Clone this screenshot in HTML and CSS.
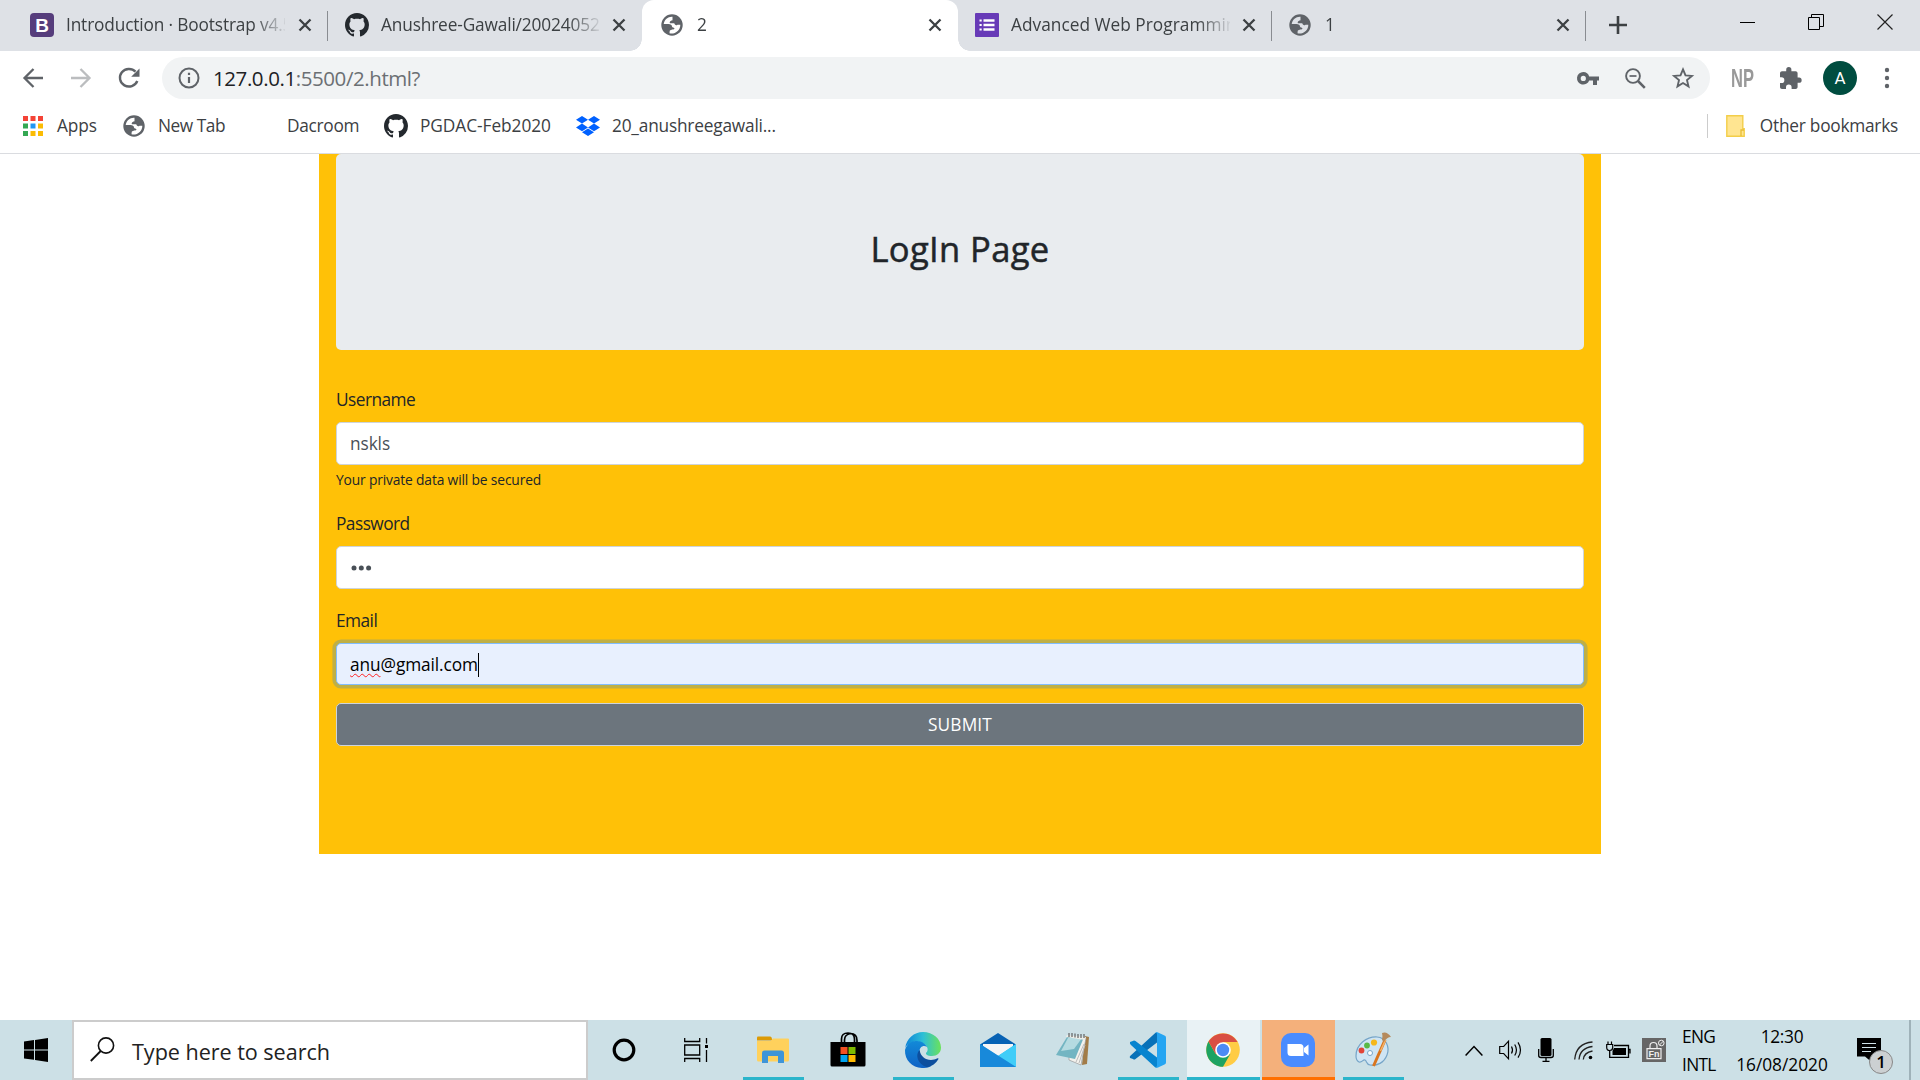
FILE: index.html
```html
<!DOCTYPE html>
<html lang="en">
<head>
<meta charset="utf-8">
<title>2</title>
<link rel="stylesheet" href="styles.css">
</head>
<body>
<svg class="defs" width="0" height="0">
  <defs>
    <symbol id="globe" viewBox="0 0 22 22"><circle cx="11" cy="11" r="10.700" fill="#5f6368"/><path fill="#dee1e6" d="M11.500 2.800C7 2.500 3.500 5.500 2.700 10H7.500C9.500 10 11 11 11 12.500C11 13.700 13.500 13.500 13.500 14.800C12 16 9 15.500 8.700 17L8.500 19.300C14 20.500 19.500 16.500 19.300 10.700H16.500C15 12 13.500 10.500 13.300 9.300H9C8 7.500 10 6.500 11.500 6.200Z"/></symbol>
    <symbol id="globe-w" viewBox="0 0 22 22"><circle cx="11" cy="11" r="10.700" fill="#5f6368"/><path fill="#fff" d="M11.500 2.800C7 2.500 3.500 5.500 2.700 10H7.500C9.500 10 11 11 11 12.500C11 13.700 13.500 13.500 13.500 14.800C12 16 9 15.500 8.700 17L8.500 19.300C14 20.500 19.500 16.500 19.300 10.700H16.500C15 12 13.500 10.500 13.300 9.300H9C8 7.500 10 6.500 11.500 6.200Z"/></symbol>
    <symbol id="github" viewBox="0 0 16 16"><path fill="#24292e" d="M8 0C3.580 0 0 3.580 0 8c0 3.540 2.290 6.530 5.470 7.590.4.070.55-.17.55-.38 0-.19-.01-.82-.01-1.490-2.010.37-2.530-.49-2.690-.94-.09-.23-.48-.94-.82-1.130-.28-.15-.68-.52-.01-.53.63-.01 1.080.58 1.230.82.72 1.210 1.870.87 2.330.66.07-.52.28-.87.51-1.070-1.780-.2-3.640-.89-3.640-3.950 0-.87.31-1.590.82-2.150-.08-.2-.36-1.020.08-2.120 0 0 .67-.21 2.200.82.64-.18 1.320-.27 2-.27s1.360.09 2 .27c1.530-1.040 2.200-.82 2.200-.82.44 1.100.16 1.920.08 2.120.51.56.82 1.270.82 2.150 0 3.070-1.870 3.750-3.650 3.950.29.25.54.73.54 1.480 0 1.070-.01 1.930-.01 2.200 0 .21.15.46.55.38A8.010 8.010 0 0 0 16 8c0-4.420-3.580-8-8-8z"/></symbol>
    <symbol id="close" viewBox="0 0 14 14"><path d="M1.500 1.500L12.500 12.500M12.500 1.500L1.500 12.500" stroke="#3c4043" stroke-width="2.300"/></symbol>
  </defs>
</svg>

<header class="tabs">
  <div class="tab first"><svg class="fav" viewBox="0 0 24 24"><rect width="24" height="24" rx="4" fill="#563d7c"/><text x="12" y="19" text-anchor="middle" class="bs">B</text></svg><span class="title t1">Introduction · Bootstrap v4.5</span><svg class="x"><use href="#close"/></svg></div>
  <div class="tab"><svg class="fav"><use href="#github"/></svg><span class="title t2">Anushree-Gawali/200240520</span><svg class="x"><use href="#close"/></svg></div>
  <div class="tab active"><svg class="fav globe"><use href="#globe-w"/></svg><span class="title">2</span><svg class="x"><use href="#close"/></svg></div>
  <div class="tab"><svg class="fav" viewBox="0 0 24 24"><rect width="24" height="24" rx="1" fill="#673ab7"/><path d="M8.500 7.500h11M8.500 12h11M8.500 16.500h11" stroke="#fff" stroke-width="2.700"/><path d="M4.500 7.500h2.200M4.500 12h2.200M4.500 16.500h2.200" stroke="#fff" stroke-width="2.200"/></svg><span class="title t4">Advanced Web Programming</span><svg class="x"><use href="#close"/></svg></div>
  <div class="tab"><svg class="fav globe"><use href="#globe"/></svg><span class="title">1</span><svg class="x"><use href="#close"/></svg></div>
  <svg class="plus" viewBox="0 0 18 18"><path d="M9 0v18M0 9h18" stroke="#3c4043" stroke-width="2.600"/></svg>
  <div class="win">
    <svg width="16" height="16"><path d="M1 8.500h15" stroke="#000"/></svg>
    <svg width="16" height="16"><path d="M.5 3.500h11v12h-11zM3.500 3.500v-3h12v12h-4" fill="none" stroke="#000"/></svg>
    <svg width="16" height="16"><path d="M.5 .5l15 15M15.500 .5l-15 15" stroke="#222" stroke-width="1.200"/></svg>
  </div>
</header>

<div class="toolbar">
  <svg width="20" height="20" viewBox="0 0 20 20"><path d="M20 10H2M10.500 1L1.500 10l9 9" fill="none" stroke="#5f6368" stroke-width="2.300"/></svg>
  <svg width="20" height="20" viewBox="0 0 20 20"><path d="M0 10h18M9.500 1l9 9-9 9" fill="none" stroke="#bbbdbf" stroke-width="2.300"/></svg>
  <svg width="21" height="20" viewBox="0 0 21 20"><path d="M18.300 13A9 8.800 0 1 1 16.500 3.700" fill="none" stroke="#5f6368" stroke-width="2.400"/><path d="M20.500 .5v8.300h-8.300z" fill="#5f6368"/></svg>
  <div class="omnibox">
    <svg width="22" height="22" viewBox="0 0 22 22"><circle cx="11" cy="11" r="9.500" fill="none" stroke="#5f6368" stroke-width="2"/><path d="M11 10v6M11 5.700v2.300" stroke="#5f6368" stroke-width="2.200"/></svg>
    <span class="url">127.0.0.1<span>:5500/2.html?</span></span>
    <svg width="22" height="13" viewBox="0 0 22 13"><path fill="#5f6368" fill-rule="evenodd" d="M6.300 0a6.300 6.300 0 1 0 5.900 8.500H16V13h4V8.500h2v-4H12.200A6.300 6.300 0 0 0 6.300 0zm0 3.800a2.600 2.600 0 1 1 0 5.200 2.600 2.600 0 0 1 0-5.200z"/></svg>
    <svg width="21" height="21" viewBox="0 0 21 21"><circle cx="8" cy="8" r="6.900" fill="none" stroke="#5f6368" stroke-width="1.900"/><path d="M4.500 8h7" stroke="#5f6368" stroke-width="1.700"/><path d="M13 13l6.800 6.800" stroke="#5f6368" stroke-width="2.500"/></svg>
    <svg width="22" height="22" viewBox="0 0 22 22"><path d="M11 2.400l2.500 6 6.400.5-4.900 4.200 1.500 6.300L11 16l-5.500 3.400L7 13.100 2.100 8.900l6.400-.5z" fill="none" stroke="#5f6368" stroke-width="1.900"/></svg>
  </div>
  <div class="ext">
    <span class="np">NP</span>
    <svg width="22" height="22" viewBox="0 0 22 22"><path fill="#5f6368" d="M19 10.500h-1.400V6.300c0-1.200-.9-2.100-2-2.100h-4.200V2.700a2.600 2.600 0 0 0-5.200 0v1.500H2c-1.100 0-2 .9-2 2v4.100h1.500a2.800 2.800 0 0 1 0 5.700H0v4c0 1.100.9 2 2 2h4v-1.600a2.800 2.800 0 0 1 5.600 0V22h4c1.100 0 2-.9 2-2v-4.200H19a2.600 2.600 0 0 0 0-5.300z"/></svg>
    <span class="avatar">A</span>
    <svg width="6" height="22" viewBox="0 0 6 22"><g fill="#5f6368"><circle cx="3" cy="3" r="2.200"/><circle cx="3" cy="11" r="2.200"/><circle cx="3" cy="19" r="2.200"/></g></svg>
  </div>
</div>

<nav class="bookmarks">
  <a class="bm apps"><svg width="20" height="20" viewBox="0 0 20 20"><g fill="#f44336"><path d="M0 0h5v5H0zM7.500 0h5v5h-5zM15 0h5v5h-5z"/></g><path fill="#34a853" d="M0 7.500h5v5H0zM0 15h5v5H0z"/><path fill="#2196f3" d="M7.500 7.500h5v5h-5z"/><path fill="#fbbc04" d="M15 7.500h5v5h-5zM7.500 15h5v5h-5zM15 15h5v5h-5z"/></svg><span>Apps</span></a>
  <a class="bm newtab"><svg width="22" height="22"><use href="#globe-w"/></svg><span>New Tab</span></a>
  <a class="bm dac"><span>Dacroom</span></a>
  <a class="bm pg"><svg width="24" height="24"><use href="#github"/></svg><span>PGDAC-Feb2020</span></a>
  <a class="bm drop"><svg width="24" height="20" viewBox="0 0 24 20"><path fill="#0061ff" d="M6 0l6 3.800-6 3.800L0 3.800zM18 0l6 3.800-6 3.800-6-3.800zM6 7.600l6 3.800-6 3.800-6-3.800zM18 7.600l6 3.800-6 3.800-6-3.800zM12 12.600l6 3.700-6 3.700-6-3.700z"/></svg><span>20_anushreegawali...</span></a>
  <a class="bm other"><svg width="19" height="22" viewBox="0 0 19 22"><path d="M.8 .8h16v13h1.400v7.400H.8z" fill="#ffe591" stroke="#f3ce49" stroke-width="1.400"/><path d="M15 21v-6h3" fill="none" stroke="#e8bd34" stroke-width="1.300"/></svg><span>Other bookmarks</span></a>
</nav>

<main class="page">
  <form class="container">
    <div class="jumbotron"><h2>LogIn Page</h2></div>
    <label class="user-label">Username</label>
    <div class="field">nskls</div>
    <small>Your private data will be secured</small>
    <label class="pass-label">Password</label>
    <div class="field"><svg width="22" height="6" viewBox="0 0 22 6"><g fill="#495057"><circle cx="4" cy="3" r="2.500"/><circle cx="11.300" cy="3" r="2.500"/><circle cx="18.600" cy="3" r="2.500"/></g></svg></div>
    <label class="mail-label">Email</label>
    <div class="field focus"><span class="typo">anu</span><span>@gmail.com</span><i class="caret"></i></div>
    <div class="submit">SUBMIT</div>
  </form>
</main>

<footer class="taskbar">
  <div class="start"><svg width="24" height="24" viewBox="0 0 24 24"><path d="M0 3.500l10-1.400v9.300H0zM11 2l13-2v11.400H11zM0 12.400h10v9.300l-10-1.300zM11 12.400h13V24l-13-2z"/></svg></div>
  <div class="search"><svg width="25" height="25" viewBox="0 0 25 25"><circle cx="16" cy="8.500" r="7.600" fill="none" stroke="#111" stroke-width="1.600"/><path d="M10.700 14L.8 24" stroke="#111" stroke-width="1.800"/></svg><span>Type here to search</span></div>
  <div class="sys"><svg width="24" height="24" viewBox="0 0 24 24"><circle cx="12" cy="12" r="9.800" fill="none" stroke="#000" stroke-width="3.200"/></svg></div>
  <div class="sys view"><svg width="25" height="24" viewBox="0 0 25 24"><path d="M.7 0v3.500h15V0M.7 24v-3.500h15V24M.7 7h15v10H.7zM22.500 0v5.500M22.500 12v12" fill="none" stroke="#000" stroke-width="1.300"/><path d="M21 7h3v3h-3z"/></svg></div>
  <div class="app run"><svg width="32" height="28" viewBox="0 0 32 28"><path fill="#dc9a05" d="M0 1.500Q0 .5 1 .5h12q1 0 1.500 1l1 3H0z"/><path fill="#ffd15c" d="M0 5h13.500l2.500-2.500h15q1 0 1 1V24q0 1.500-1.500 1.500h-29Q0 25.500 0 24z"/><path fill="#3f95d8" d="M5 17q0-2.500 2.500-2.500h17Q27 14.500 27 17v10h-6v-7H11v7H5z"/></svg></div>
  <div class="app"><svg width="36" height="36" viewBox="0 0 36 36"><path d="M11.500 11V7q0-6 6.500-6t6.500 6v4M14.500 11V8q0-5.500 6-6.500 6.500 0 6.500 7v3" fill="none" stroke="#000" stroke-width="1.700"/><path d="M.5 10h35v23q0 1.500-1.500 1.500H2Q.5 34.500.5 33z"/><path fill="#f25022" d="M10.500 15h7v7h-7z"/><path fill="#7fba00" d="M18.500 15h7v7h-7z"/><path fill="#00a4ef" d="M10.500 23h7v7h-7z"/><path fill="#ffb900" d="M18.500 23h7v7h-7z"/></svg></div>
  <div class="app run"><svg width="36" height="36" viewBox="0 0 36 36"><defs><linearGradient id="e1"><stop offset="0" stop-color="#0b83d8"/><stop offset=".5" stop-color="#2ebfd6"/><stop offset="1" stop-color="#6be25a"/></linearGradient><linearGradient id="e2" x2="0" y2="1"><stop offset="0" stop-color="#128ad8"/><stop offset="1" stop-color="#0f62c5"/></linearGradient></defs><path fill="url(#e1)" d="M.2 16C1.500 6.500 9 0 18 0c10 0 18 7 18 15.500 0 5.500-4 8.500-9 8.500-4.500 0-6.500-1.700-6-3 2-2 2-4 1-6C19 9 5 7 .2 16z"/><path fill="url(#e2)" d="M0 18C2 11 7 8.500 12 9c4.500.3 8.500 2.500 10 6-3.500-2.500-7.500 0-7.500 4.500C14.500 26 19 31 26 34c-3 2-6.500 2-9 2C7 35.500-.5 28 0 18z"/><path fill="#0d4f9e" d="M14.700 18C10 22 12 32 22 35.300c5-1 9-4 11.500-8.300.2-.7-.4-1-1-.7-8 4-17 .2-17.800-8.300z"/></svg></div>
  <div class="app"><svg width="36" height="34" viewBox="0 0 36 34"><path fill="#0762b4" d="M0 11.500L18 0l18 11.500v6H0z"/><path fill="#f5f5f5" d="M3 11h30v5L18 27 3 16z"/><path fill="#2fb8ef" d="M36 11v23H0V11l18 12z"/><path fill="#40cdf8" d="M36 11v23L18 23z"/><path fill="#1889da" d="M0 11l36 23H0z"/></svg></div>
  <div class="app"><svg width="36" height="34" viewBox="0 0 36 34"><path fill="#a27c48" d="M30 3l4 1-2 27-5 1z"/><path fill="#f3f2ed" stroke="#999" stroke-width=".7" d="M14 3l17 2-5 27-12-5z"/><path fill="#73b5c2" d="M12 4h17l-9 22L1 22z"/><path fill="#b5dbe1" d="M13 5h14l-8 11-13 2z"/><path fill="#edeee9" d="M12 2l19 2-1 3-19-3z"/><path d="M14 0v4M17 0v4M20 .5v4M23 1v4M26 1v4M29 1v4" stroke="#555" stroke-width="1.100"/><path d="M21 29l8-18M24 30l6-18" stroke="#bbb"/></svg></div>
  <div class="app run"><svg width="36" height="36" viewBox="0 0 36 36"><path fill="#0871b8" d="M0 26q-.7-1.300.4-2.300L25.500.7Q27 0 27 1v9.500L5.500 27q-1.300 1-2.500 0z"/><path fill="#0784cf" d="M0 10q-.4 1.600.7 2.700L25 35.300q2 1.200 2-1.300v-8.500L5.500 9Q4 8 2.800 9z"/><path fill="#25a5f2" d="M25.500.5Q26.500-.2 28 .4l7 3.400q1 .6 1 2v24.400q0 1.400-1 2l-7 3.400q-1.500.7-2.500 0 1.500.2 1.500-2V2.500Q27 .3 25.500.5z"/></svg></div>
  <div class="app tile chrome"><svg width="34" height="34" viewBox="0 0 34 34"><circle cx="17" cy="17" r="16.800" fill="#fc4"/><path fill="#1da362" d="M2.500 8.600A16.800 16.800 0 0 0 17 33.800L24.300 21 17 24 9.700 21z"/><path fill="#d94f43" d="M2.500 8.600A16.800 16.800 0 0 1 31.500 9H17L9.700 21z"/><circle cx="17" cy="17" r="7.800" fill="#fff"/><circle cx="17" cy="17" r="6.200" fill="#4c8bf5"/></svg></div>
  <div class="app tile zoomed"><svg width="34" height="34" viewBox="0 0 34 34"><rect width="34" height="34" rx="10" fill="#4a8cff"/><path fill="#fff" d="M6.500 11h12.500q3.500 0 3.500 3.500V23H10q-3.500 0-3.500-3.500zM23 15l4.500-3.500v11L23 19z"/></svg></div>
  <div class="app run"><svg width="36" height="36" viewBox="0 0 36 36"><path fill="#cfe5f4" stroke="#76a5c8" stroke-width="1.200" d="M1 24C1 12 12 4.500 22 5c9 .5 13 10 10 18-3 8-10 11-17 10-4-.7-3-4-5-5-2-1-3 3-6 2-2-1-3-3-3-6z"/><circle cx="6.500" cy="18.500" r="2.900" fill="#e24438"/><circle cx="12" cy="13.500" r="2.900" fill="#58b947"/><circle cx="19" cy="10.500" r="3.100" fill="#f5b81c"/><circle cx="15" cy="21" r="2.500" fill="#fff" stroke="#76a5c8"/><path d="M30 8L18.500 34" stroke="#d9751e" stroke-width="3"/><path d="M30.500 8l-5 11" stroke="#f4b46d" stroke-width="1.500"/><path fill="#b58a5c" d="M27 1q5-2 9 4-4 0-7 5l-2-2q1-4 0-7z"/></svg></div>
  <div class="tray">
    <svg width="18" height="11" viewBox="0 0 18 11"><path d="M.6 10.400L9 1.500l8.400 8.900" fill="none" stroke="#000" stroke-width="1.500"/></svg>
    <svg width="23" height="20" viewBox="0 0 23 20"><path d="M.7 6.500h4L9.500 1.200v17.600L4.700 13.500h-4zM12.500 6.500q2 3.500 0 7M15.700 4.500q3.500 5.500 0 11M19 2.300q5 7.700 0 15.400" fill="none" stroke="#000" stroke-width="1.200"/></svg>
    <svg width="16" height="24" viewBox="0 0 16 24"><rect x="2.500" width="11" height="18" rx="1.500"/><path d="M.7 11v6.500q0 2 2.300 2h10q2.300 0 2.300-2V11M8 19.500V23M4.500 23.300h7" fill="none" stroke="#000" stroke-width="1.300"/></svg>
    <svg width="19" height="19" viewBox="0 0 19 19"><path d="M.7 18.500Q2 2.500 18.500 1M5 18.500Q6 7 18.500 5.500M9.300 18.500Q10 11.500 18.500 10" fill="none" stroke="#222" stroke-width="1.300"/><circle cx="16.500" cy="16.500" r="1.800"/></svg>
    <svg width="25" height="18" viewBox="0 0 25 18"><path d="M8 4.500h14.500v11.800H3.700V10M22.500 8.500h1.500v4" fill="none" stroke="#000" stroke-width="1.300"/><path d="M8 7h12v7H6.500V10z"/><path d="M.7 3.500h6v3q0 3-3 3t-3-3zM2 3.500V.5M5.500 3.500V.5" fill="none" stroke="#000" stroke-width="1.200"/></svg>
    <svg width="24" height="24" viewBox="0 0 24 24"><path fill="#666" d="M0 0h24v24H0z"/><path d="M5 10.700h14v10H5zM8 10.500V8q0-3.500 3.500-3.500T15 8v2.500" fill="none" stroke="#eee" stroke-width="1.200"/><circle cx="19.300" cy="5" r="2.800" fill="none" stroke="#eee"/><path d="M17.500 7l4-4" stroke="#eee"/><text x="12" y="19" text-anchor="middle" class="fn">Fn</text></svg>
  </div>
  <div class="two lang"><span class="eng">ENG</span><span class="intl">INTL</span></div>
  <div class="two clock"><span class="time">12:30</span><span>16/08/2020</span></div>
  <div class="note"><svg width="25" height="24" viewBox="0 0 25 24"><path d="M0 0h24v18.500H14v5L8 18.500H0z"/><path d="M5 5.500h14M5 9.500h14M5 13.500h9" stroke="#cfe2e8" stroke-width="1"/></svg><b>1</b></div>
</footer>
</body>
</html>
```
FILE: styles.css
```css
* { box-sizing: border-box; }
body { margin: 0; width: 1920px; height: 1080px; overflow: hidden; display: flex; flex-direction: column; background: #fff; font: 17.3px/24px "Open Sans", "Noto Sans", sans-serif; color: #3c4043; }
svg { display: block; flex: none; overflow: visible; }
.defs { position: absolute; }

.tabs { height: 51px; background: #dee1e6; display: flex; align-items: center; padding-left: 14px; }
.tab { width: 314px; height: 51px; padding: 0 16px 1px 17px; display: flex; align-items: center; }
.tab.first { padding-left: 16px; }
.tab:not(.active) { background: linear-gradient(#898c91, #898c91) 100% 11px / 1.500px 30px no-repeat; }
.tab:nth-child(2) { background: none; }
.tab.active { width: 316px; padding-left: 19px; background: #fff; border-radius: 12px 12px 0 0; position: relative; }
.tab.active::before, .tab.active::after { content: ""; position: absolute; bottom: 0; width: 12px; height: 12px; }
.tab.active::before { left: -12px; background: radial-gradient(circle at 0 0, transparent 11.500px, #fff 12px); }
.tab.active::after { right: -12px; background: radial-gradient(circle at 100% 0, transparent 11.500px, #fff 12px); }
.fav { width: 24px; height: 24px; }
.fav.globe { width: 22px; height: 22px; margin-right: 2px; }
.bs { font: bold 19px "Liberation Sans", sans-serif; fill: #fff; }
.title { width: 219px; margin-left: 12px; overflow: hidden; white-space: nowrap; letter-spacing: -.15px; -webkit-mask-image: linear-gradient(90deg, #000 187px, transparent 222px); mask-image: linear-gradient(90deg, #000 187px, transparent 222px); }
.title.t4 { letter-spacing: .02px; }
.x { width: 14px; height: 14px; margin-left: 13px; }
.tab:nth-child(n+4) .x { margin-left: 12px; }
.plus { width: 18px; height: 18px; margin: -2px 0 0 23px; }
.win { margin: -7px 27px 0 auto; display: flex; gap: 53px; }

.toolbar { height: 54px; padding: 0 30px 0 23px; display: flex; align-items: center; gap: 28px; }
.omnibox { width: 1548px; height: 42px; margin-left: -6px; padding: 0 16px; border-radius: 21px; background: #f1f3f4; display: flex; align-items: center; gap: 26px; flex: none; }
.url { margin: 0 auto 0 -13px; font-size: 20.500px; letter-spacing: -.42px; color: #202124; }
.url span { color: #6b6f73; }
.ext { margin-left: -7px; display: flex; align-items: center; flex: none; }
.np { width: 24px; font: bold 25px/26px "Liberation Sans Narrow", "Liberation Sans", sans-serif; color: #999; transform: scaleX(.66); transform-origin: 0 50%; margin-right: 25px; }
.avatar { width: 34px; height: 34px; margin: 0 27px 0 21px; border-radius: 50%; background: #004d40; color: #fff; font: 17px/34px Roboto, sans-serif; text-align: center; }

.bookmarks { height: 49px; padding: 0 22px 6px 23px; border-bottom: 1px solid #dadce0; display: flex; align-items: center; }
.bm { display: flex; align-items: center; gap: 13px; white-space: nowrap; letter-spacing: -.25px; }
.apps { width: 100px; gap: 14px; letter-spacing: -.07px; }
.newtab { width: 164px; letter-spacing: -.46px; }
.dac { width: 97px; letter-spacing: -.3px; }
.pg { width: 192px; gap: 12px; letter-spacing: -.05px; }
.drop { gap: 12px; letter-spacing: -.2px; }
.other { margin-left: auto; padding-left: 19px; gap: 15px; background: linear-gradient(#ccc, #ccc) 0 50% / 1px 24px no-repeat; }

.page { height: 866px; }
.container { width: 1282px; height: 700px; margin: 0 auto; padding: 0 17px; background: #ffc107; color: #212529; display: flex; flex-direction: column; }
.jumbotron { height: 196px; border-radius: 5px; background: #e9ecef; display: flex; justify-content: center; padding-top: 73px; }
h2 { margin: 0; font: 600 34.600px/43px "Open Sans", sans-serif; font-weight: 500; letter-spacing: .35px; -webkit-text-stroke: .5px #212529; }
label { line-height: 27px; letter-spacing: -.53px; }
.user-label { margin: 36px 0 9px; }
.field, .submit { height: 43px; border: 1px solid #ced4da; border-radius: 5px; background: #fff; color: #495057; padding: 0 13px; display: flex; align-items: center; flex: none; letter-spacing: -.1px; }
small { font-size: 13.820px; line-height: 20px; letter-spacing: -.16px; margin-top: 5px; }
.pass-label { margin: 20px 0 9px; }
.mail-label { margin: 18px 0 9px; }
.focus { height: 42px; padding-top: 2px; background: #e8f0fe; border-color: #80bdff; color: #000; box-shadow: 0 0 0 3.600px rgba(0, 123, 255, .25); }
.typo { text-decoration: underline wavy #f22 1px; text-underline-offset: 2px; text-decoration-skip-ink: none; }
.caret { width: 1px; height: 24px; background: #000; }
.submit { margin-top: 18px; background: #6c757d; color: #fff; justify-content: center; letter-spacing: .15px; }

.taskbar { height: 60px; background: #cce0e6; display: flex; color: #000; }
.start { width: 72px; padding: 18px 24px; }
.search { width: 516px; border: 2px solid #ccc; background: #fff; display: flex; align-items: center; padding: 0 16px; gap: 17px; font-size: 21.600px; letter-spacing: -.04px; color: #222; }
.search svg { margin-top: -2px; }
.search span { margin-top: 3px; }
.sys { width: 72px; display: flex; align-items: center; justify-content: center; }
.view { width: 76px; padding-right: 4px; }
.app { width: 75px; height: 60px; padding-right: 2px; display: flex; align-items: center; justify-content: center; }
.run { background: linear-gradient(#2bb5cb, #2bb5cb) 50% 100% / 61px 3px no-repeat; }
.tile { width: 73px; margin: 0 1px; border-bottom: 3px solid #2bb5cb; padding-top: 3px; }
.chrome { background: #e9f2f5; }
.zoomed { background: #f4b07b; border-color: #ff6f00; }
.tray { margin-left: 54px; display: grid; grid-template-columns: 34px 39px 36px 32px 36px 24px; align-items: center; }
.fn { font: bold 9px "Liberation Sans", sans-serif; fill: #eee; }
.two { display: flex; flex-direction: column; line-height: 28px; padding-top: 3px; }
.lang { width: 33px; margin-left: 16px; }
.eng { letter-spacing: -.7px; }
.intl { letter-spacing: -.7px; }
.clock { width: 92px; margin-left: 21px; align-items: center; }
.time { letter-spacing: -.3px; }
.note { position: relative; width: 54px; height: 60px; margin-left: 29px; padding-top: 18px; border-right: 2px solid #9fb2b9; }
.note b { position: absolute; left: 12px; top: 30px; width: 24px; height: 24px; border: 1px solid #888; border-radius: 50%; background: #ccd0d2; font: 600 17px/22px "Open Sans", sans-serif; text-align: center; }
```
